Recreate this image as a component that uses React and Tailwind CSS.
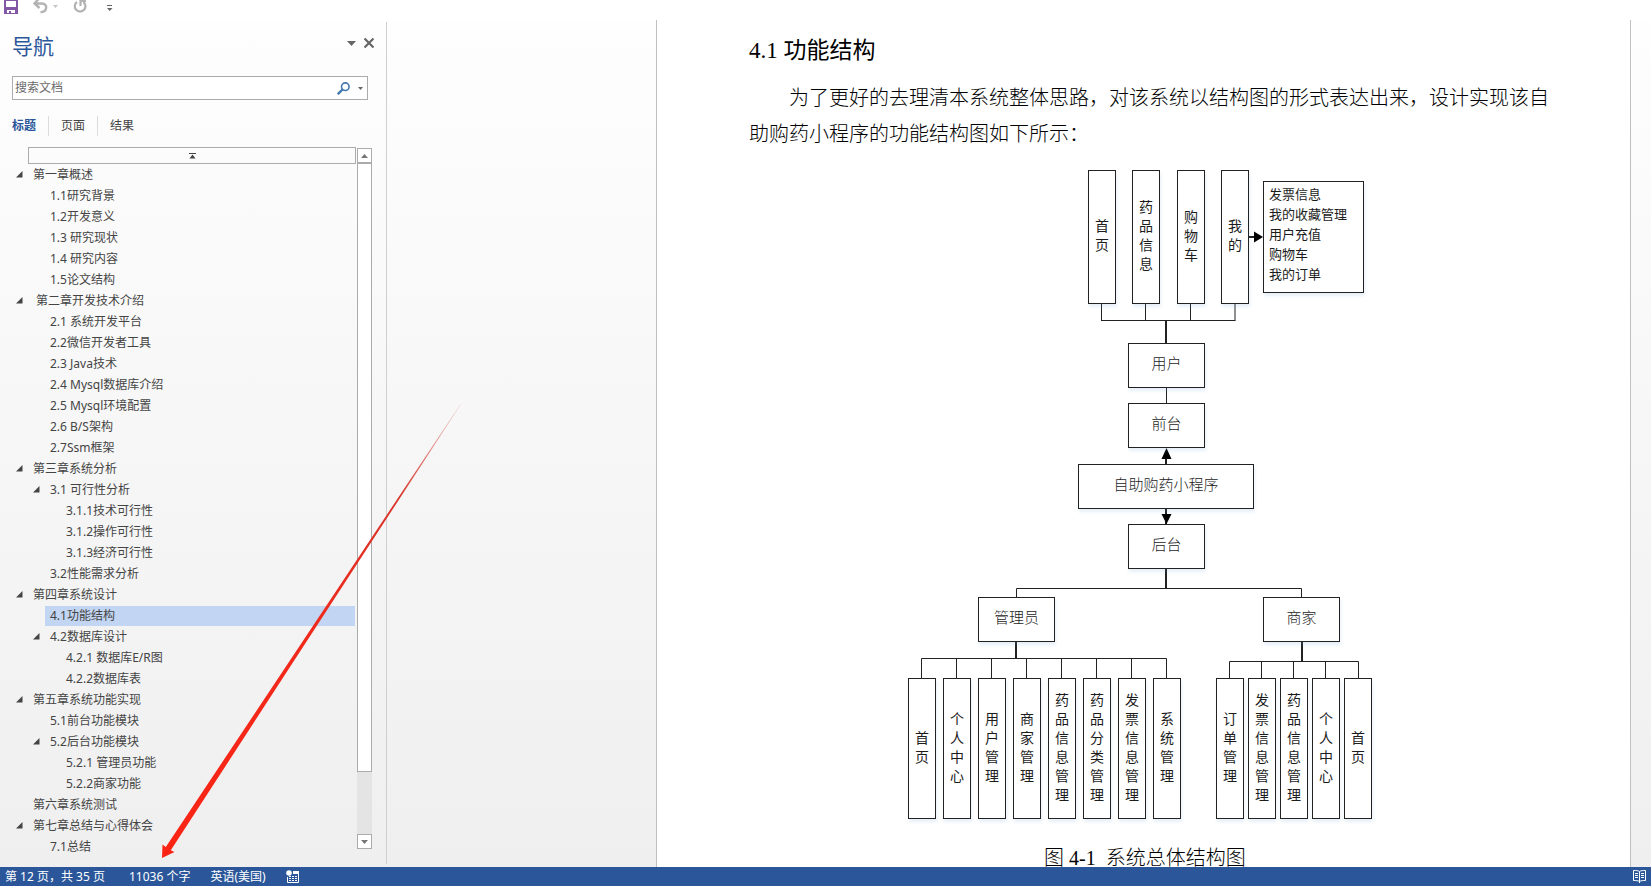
import React from "react";

const outline = [
  { level: 1, text: "第一章概述", open: true },
  { level: 2, text: "1.1研究背景" },
  { level: 2, text: "1.2开发意义" },
  { level: 2, text: "1.3 研究现状" },
  { level: 2, text: "1.4 研究内容" },
  { level: 2, text: "1.5论文结构" },
  { level: 1, text: " 第二章开发技术介绍", open: true },
  { level: 2, text: "2.1 系统开发平台" },
  { level: 2, text: "2.2微信开发者工具" },
  { level: 2, text: "2.3 Java技术" },
  { level: 2, text: "2.4 Mysql数据库介绍" },
  { level: 2, text: "2.5 Mysql环境配置" },
  { level: 2, text: "2.6 B/S架构" },
  { level: 2, text: "2.7Ssm框架" },
  { level: 1, text: "第三章系统分析", open: true },
  { level: 2, text: "3.1 可行性分析", open: true },
  { level: 3, text: "3.1.1技术可行性" },
  { level: 3, text: "3.1.2操作可行性" },
  { level: 3, text: "3.1.3经济可行性" },
  { level: 2, text: "3.2性能需求分析" },
  { level: 1, text: "第四章系统设计", open: true },
  { level: 2, text: "4.1功能结构", current: true },
  { level: 2, text: "4.2数据库设计", open: true },
  { level: 3, text: "4.2.1 数据库E/R图" },
  { level: 3, text: "4.2.2数据库表" },
  { level: 1, text: "第五章系统功能实现", open: true },
  { level: 2, text: "5.1前台功能模块" },
  { level: 2, text: "5.2后台功能模块", open: true },
  { level: 3, text: "5.2.1 管理员功能" },
  { level: 3, text: "5.2.2商家功能" },
  { level: 1, text: "第六章系统测试" },
  { level: 1, text: "第七章总结与心得体会", open: true },
  { level: 2, text: "7.1总结" },
];

const indent = { 1: "pl-3", 2: "pl-[29px]", 3: "pl-[45px]" };

const columns = [
  ...["首页", "药品信息", "购物车", "我的"].map((text, i) => ({
    text, x: [339, 383, 428, 472][i], y: 10, h: 134,
  })),
  ...["首页", "个人中心", "用户管理", "商家管理", "药品信息管理", "药品分类管理", "发票信息管理", "系统管理"].map(
    (text, i) => ({ text, x: 159 + 35 * i, y: 518, h: 141 })
  ),
  ...["订单管理", "发票信息管理", "药品信息管理", "个人中心", "首页"].map((text, i) => ({
    text, x: 467 + 32 * i, y: 518, h: 141,
  })),
];

const boxes = [
  { text: "用户", x: 379, y: 183, w: 77 },
  { text: "前台", x: 379, y: 243, w: 77 },
  { text: "自助购药小程序", x: 329, y: 304, w: 176 },
  { text: "后台", x: 379, y: 364, w: 77 },
  { text: "管理员", x: 229, y: 437, w: 77 },
  { text: "商家", x: 514, y: 437, w: 77 },
];

function Node({ x, y, w, h, className, children }) {
  return (
    <div
      className={`absolute flex items-center border border-[#222] bg-white shadow-[1px_3px_3px_rgba(110,160,220,0.16)] ${className}`}
      style={{ left: x, top: y, width: w, height: h }}
    >
      {children}
    </div>
  );
}

function Diagram() {
  return (
    <div className="relative h-[670px] w-full text-[#1c1c1c]">
      <svg className="absolute left-0 top-0" width="640" height="670" fill="none" stroke="#222" aria-hidden="true">
        <path d="M352.5 143V160.5M396.5 143V160.5M441.5 143V160.5M486 143V160.5M352 160.5H486.5" />
        <path d="M417 160V183" strokeWidth="2" />
        <path d="M417.5 228V243" />
        <path d="M417 348V366M417 295V304" strokeWidth="2" />
        <path d="M417.5 288L422.5 299H412.5ZM417.5 364L422.5 354H412.5Z" fill="#000" stroke="none" />
        <path d="M417 409V429" strokeWidth="2" />
        <path d="M267.5 437V428.5H552.5V437" />
        <path d="M267 481V499M553 481V502" strokeWidth="2" />
        <path d="M172.5 518V498.5H417.5V518M207.5 499V518M242.5 499V518M277.5 499V518M312.5 499V518M347.5 499V518M382.5 499V518" />
        <path d="M480.5 518V501.5H609.5V518M512.5 502V518M544.5 502V518M576.5 502V518" />
        <path d="M500 77H508" strokeWidth="2" />
        <path d="M505 71.500L514 77L505 82.500Z" fill="#000" stroke="none" />
      </svg>
      {columns.map((c) => (
        <Node key={`${c.x}-${c.y}`} x={c.x} y={c.y} w={28} h={c.h} className="justify-center pb-0.5">
          <span className="w-[14px] break-all text-center text-[14px] leading-[19px]">{c.text}</span>
        </Node>
      ))}
      {boxes.map((b) => (
        <Node key={b.text} x={b.x} y={b.y} w={b.w} h={45} className="justify-center pb-0.5">
          <span className="text-[15px] font-light">{b.text}</span>
        </Node>
      ))}
      <Node x={514} y={21} w={101} h={112} className="pb-1 pl-[5px]">
        <ul className="text-[13px] leading-5">
          {["发票信息", "我的收藏管理", "用户充值", "购物车", "我的订单"].map((t) => (
            <li key={t}>{t}</li>
          ))}
        </ul>
      </Node>
    </div>
  );
}

function Toolbar() {
  return (
    <header className="flex h-5 shrink-0 items-start bg-white pl-1">
      <button aria-label="保存" className="mr-[15px]">
        <svg width="14" height="14" viewBox="0 0 14 14">
          <path d="M0 0H14V14H0Z" fill="#8258a4" />
          <path d="M2 1H12V7H2Z" fill="#fff" />
          <path d="M3 10H11V13H3Z" fill="#fff" />
          <path d="M5 11H7V13H5Z" fill="#8258a4" />
        </svg>
      </button>
      <button aria-label="撤消" className="mr-[15px]">
        <svg width="25" height="14" viewBox="0 0 25 14" fill="none" stroke="#b3b3b3">
          <path d="M5.500 -1L1.500 3.500L6.500 8M1.500 3.500H8.500C12.500 3.500 13.500 6 13 8.500C12.500 11 10.500 12.200 7.500 12.200" strokeWidth="2.400" />
          <path d="M20 5H25L22.500 8Z" fill="#c4c4c4" stroke="none" />
        </svg>
      </button>
      <button aria-label="恢复" className="mr-5">
        <svg width="14" height="14" viewBox="0 0 14 14" fill="none" stroke="#b3b3b3" strokeWidth="2.200">
          <path d="M4 2A5.300 5.300 0 1 0 10.200 2M7.500 6V1H13" />
        </svg>
      </button>
      <button aria-label="自定义快速访问工具栏" className="pt-1">
        <svg width="6" height="8" viewBox="0 0 6 8" fill="#666">
          <path d="M0 1H5V2H0ZM0 4H5.500L2.750 7Z" />
        </svg>
      </button>
    </header>
  );
}

function Navigation() {
  return (
    <aside className="mt-0.5 mb-[3px] flex w-[387px] shrink-0 flex-col border-r border-[#cfcfcf] px-3">
      <div className="flex items-start justify-between pt-2">
        <h2 className="text-[21px] leading-[32px] text-[#2b579a]">导航</h2>
        <div className="flex items-center gap-2 pt-2">
          <button aria-label="任务窗格选项">
            <svg width="9" height="5" viewBox="0 0 9 5" fill="#666"><path d="M0 0H9L4.500 5Z" /></svg>
          </button>
          <button aria-label="关闭">
            <svg width="10" height="10" viewBox="0 0 10 10" stroke="#666" strokeWidth="2.200"><path d="M0.500 0.500L9.500 9.500M9.500 0.500L0.500 9.500" /></svg>
          </button>
        </div>
      </div>
      <div className="mt-[14px] flex h-6 w-[356px] items-center border border-[#ababab] bg-white pr-1">
        <input aria-label="搜索文档" placeholder="搜索文档" className="min-w-0 flex-1 bg-transparent pl-0.5 outline-none placeholder:text-[#6b6b6b]" />
        <button aria-label="搜索">
          <svg width="13" height="13" viewBox="0 0 13 13" fill="none" stroke="#4178b0">
            <circle cx="8.300" cy="4.700" r="3.800" strokeWidth="1.600" />
            <path d="M5.500 7.500L0.800 12.200" strokeWidth="2.400" />
          </svg>
        </button>
        <button aria-label="搜索选项" className="ml-2">
          <svg width="5" height="3" viewBox="0 0 5 3" fill="#666"><path d="M0 0H5L2.500 3Z" /></svg>
        </button>
      </div>
      <div className="mt-4 flex h-5 items-center">
        <button className="pr-3 font-bold text-[#2b579a]">标题</button>
        <button className="h-5 border-l border-[#dcdcdc] px-3">页面</button>
        <button className="h-5 border-l border-[#dcdcdc] px-3">结果</button>
      </div>
      <div className="mt-[11px] mb-3 flex min-h-0 flex-1">
        <div className="flex min-h-0 flex-1 flex-col pl-1">
          <button aria-label="跳到开头" className="ml-3 flex h-[17px] shrink-0 items-center justify-center border border-[#ababab]">
            <svg width="7" height="6" viewBox="0 0 7 6" fill="#444"><path d="M0 0H7V1H0ZM3.500 1.500L6.500 5.500H0.500Z" /></svg>
          </button>
          <ul className="min-h-0 flex-1 overflow-hidden">
            {outline.map((item) => (
              <li key={item.text} className={`flex h-[21px] items-center pr-px ${indent[item.level]}`}>
                <span className="-ml-3 flex w-3 shrink-0">
                  {item.open && (
                    <svg width="7" height="7" viewBox="0 0 7 7" fill="#444"><path d="M6.500 0V6.500H0Z" /></svg>
                  )}
                </span>
                <a
                  href="#outline"
                  aria-current={item.current ? "location" : undefined}
                  className={`h-5 flex-1 whitespace-pre pl-[5px] leading-5 ${item.current ? "bg-[#c2d5f2]" : ""}`}
                >
                  {item.text}
                </a>
              </li>
            ))}
          </ul>
        </div>
        <div className="mb-[3px] ml-px mr-[2px] mt-px flex w-[15px] flex-col bg-[#e4e4e4]">
          <button aria-label="向上滚动" className="flex h-[15px] items-center justify-center border border-[#ababab] bg-white">
            <svg width="7" height="4" viewBox="0 0 7 4" fill="#777"><path d="M0 4H7L3.500 0Z" /></svg>
          </button>
          <div className="min-h-0 flex-[608] border border-[#ababab] bg-white" />
          <div className="min-h-0 flex-[62]" />
          <button aria-label="向下滚动" className="flex h-[15px] items-center justify-center border border-[#ababab] bg-white">
            <svg width="7" height="4" viewBox="0 0 7 4" fill="#777"><path d="M0 0H7L3.500 4Z" /></svg>
          </button>
        </div>
      </div>
    </aside>
  );
}

function StatusBar() {
  return (
    <footer className="flex h-[19px] shrink-0 items-center bg-[#2b579a] px-[5px] leading-[19px] text-white">
      <span className="mr-6">第 12 页，共 35 页</span>
      <span className="mr-5">11036 个字</span>
      <span className="mr-5">英语(美国)</span>
      <button aria-label="宏录制">
        <svg width="13" height="13" viewBox="0 0 13 13">
          <path d="M7 1.500H12.500V12.500H1.500V7" fill="none" stroke="#fff" />
          <path d="M7 1H13V4H7Z" fill="#fff" />
          <circle cx="3" cy="3" r="2.800" fill="#fff" />
          <path d="M3 6.500H5M6 6.500H8M9 6.500H11M3 8.500H5M6 8.500H8M9 8.500H11M3 10.500H5M6 10.500H8M9 10.500H11" stroke="#fff" />
        </svg>
      </button>
      <button aria-label="阅读视图" className="ml-auto">
        <svg width="13" height="13" viewBox="0 0 13 13" fill="none" stroke="#fff">
          <path d="M6.500 1.500C5 0.500 3 0.500 0.500 0.500V10.500C3 10.500 5 10.500 6.500 11.500C8 10.500 10 10.500 12.500 10.500V0.500C10 0.500 8 0.500 6.500 1.500ZM6.500 1.500V13" />
          <path d="M2 3.500H5M2 5.500H5M2 7.500H5M8 3.500H11M8 5.500H11M8 7.500H11" />
        </svg>
      </button>
    </footer>
  );
}

export default function App() {
  return (
    <div className='relative flex h-screen flex-col overflow-hidden bg-white font-["Noto_Sans","Noto_Sans_CJK_SC",sans-serif] text-[12px] text-[#444]'>
      <Toolbar />
      <main className="flex min-h-0 flex-1 bg-linear-to-b from-[#fefefe] to-[#efefef]">
        <Navigation />
        <div className="w-[269px] shrink-0" />
        <article className='min-w-0 flex-1 overflow-hidden border-x border-[#c0c0c0] bg-white pl-[92px] pr-[80px] pt-[14px] font-["Liberation_Serif","Noto_Sans_CJK_SC",serif] text-black'>
          <h1 className="text-[23px] leading-[34px]">4.1 功能结构</h1>
          <p className="mt-3 indent-[40px] text-[20px] font-light leading-[36px]">
            为了更好的去理清本系统整体思路，对该系统以结构图的形式表达出来，设计实现该自助购药小程序的功能结构图如下所示：
          </p>
          <figure className="mt-2">
            <Diagram />
            <figcaption className="mt-[14px] pl-[295px] text-[20px] font-light leading-[28px]">
              图 4-1&nbsp;&nbsp;系统总体结构图
            </figcaption>
          </figure>
        </article>
        <div className="w-5 shrink-0" />
      </main>
      <StatusBar />
      <svg className="pointer-events-none absolute left-0 top-0" width="480" height="870" aria-hidden="true">
        <defs>
          <linearGradient id="fade" gradientUnits="userSpaceOnUse" x1="460" y1="404" x2="162" y2="858">
            <stop offset="0" stopColor="#d03a30" stopOpacity="0.150" />
            <stop offset="0.200" stopColor="#d8352a" />
            <stop offset="0.500" stopColor="#f02a1c" />
            <stop offset="1" stopColor="#fb2414" />
          </linearGradient>
        </defs>
        <path d="M460.500 404L461 404.300L170.800 850.200L174.500 852L162 858L162.500 844.500L165.800 847Z" fill="url(#fade)" />
      </svg>
    </div>
  );
}
